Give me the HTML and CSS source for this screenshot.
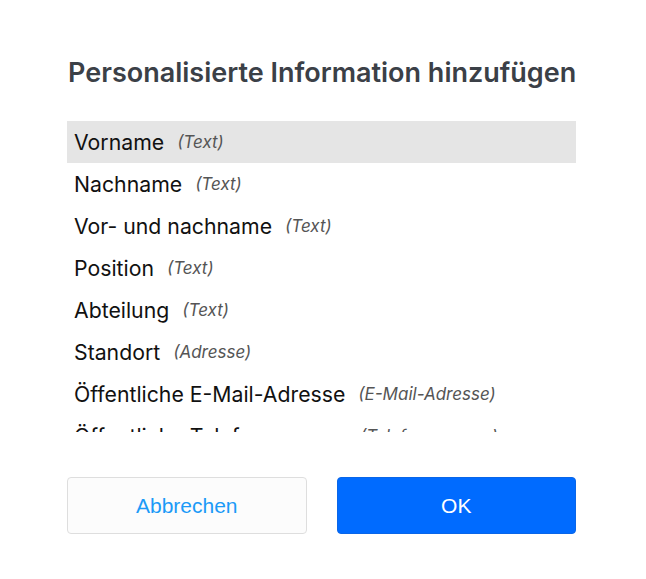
FILE: index.html
```html
<!DOCTYPE html>
<html lang="de">
<head>
<meta charset="utf-8">
<link rel="stylesheet" href="styles.css">
</head>
<body>
<div class="dialog">
  <h1 class="title">Personalisierte Information hinzufügen</h1>
  <ul class="list">
    <li class="item selected"><span class="name">Vorname</span><span class="type">(Text)</span></li>
    <li class="item"><span class="name">Nachname</span><span class="type">(Text)</span></li>
    <li class="item"><span class="name">Vor- und nachname</span><span class="type">(Text)</span></li>
    <li class="item"><span class="name">Position</span><span class="type">(Text)</span></li>
    <li class="item"><span class="name">Abteilung</span><span class="type">(Text)</span></li>
    <li class="item"><span class="name">Standort</span><span class="type">(Adresse)</span></li>
    <li class="item"><span class="name">Öffentliche E-Mail-Adresse</span><span class="type">(E-Mail-Adresse)</span></li>
    <li class="item"><span class="name">Öffentliche Telefonnummer</span><span class="type">(Telefonnummer)</span></li>
    <li class="item"><span class="name">Mobiltelefonnummer</span><span class="type">(Telefonnummer)</span></li>
  </ul>
  <div class="actions">
    <button class="btn btn-cancel">Abbrechen</button>
    <button class="btn btn-ok">OK</button>
  </div>
</div>
</body>
</html>
```
FILE: styles.css
```css
html, body {
  margin: 0;
  padding: 0;
  background: #ffffff;
}
.dialog {
  width: 509px;
  margin-left: 67px;
  padding-top: 55px;
  font-family: Inter, "Noto Sans", sans-serif;
}
.title {
  margin: 0 0 0 1px;
  font-size: 27px;
  font-weight: 600;
  color: #3b4047;
  line-height: 36px;
  white-space: nowrap;
}
.list {
  list-style: none;
  margin: 30px 0 0 0;
  padding: 0;
  height: 311px;
  overflow: hidden;
}
.item {
  height: 42px;
  display: flex;
  align-items: center;
  padding-left: 7px;
  color: #111;
  white-space: nowrap;
}
.item.selected {
  background: #e5e5e5;
}
.name {
  font-size: 21.25px;
}
.type {
  font-size: 17px;
  font-style: italic;
  color: #555;
  margin-left: 13px;
}
.actions {
  display: flex;
  gap: 30px;
  margin-top: 45px;
}
.btn {
  flex: 1;
  height: 57px;
  border-radius: 4px;
  font-family: "Liberation Sans", Arial, sans-serif;
  font-size: 21px;
  cursor: pointer;
}
.btn-cancel {
  background: #fcfcfc;
  border: 1px solid #dedede;
  color: #1b9af7;
}
.btn-ok {
  background: #006bff;
  border: 1px solid #0a66e8;
  color: #ffffff;
}
```
